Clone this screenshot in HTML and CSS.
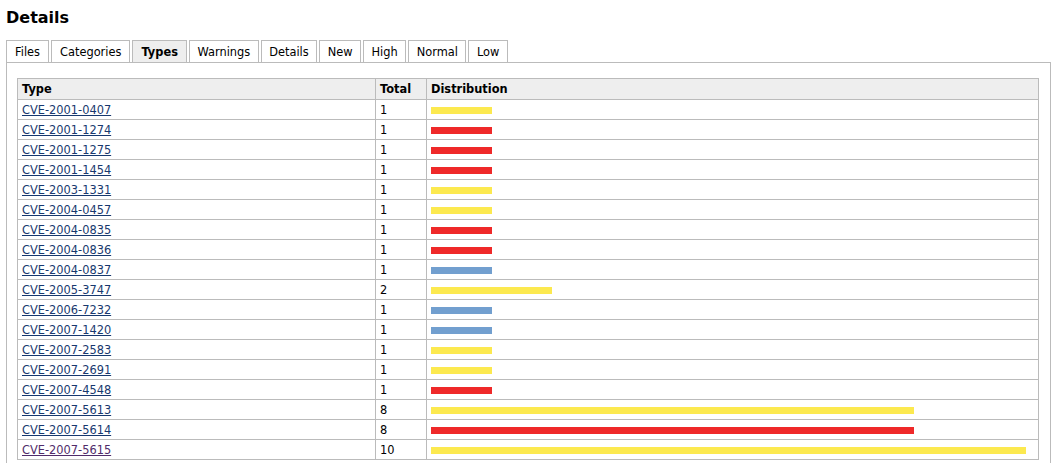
FILE: index.html
```html
<!DOCTYPE html>
<html>
<head>
<meta charset="utf-8">
<title>Details</title>
<link rel="stylesheet" href="styles.css">
</head>
<body>
<h1 class="title">Details</h1>
<ul class="tabs">
  <li class="tab">Files</li>
  <li class="tab">Categories</li>
  <li class="tab active">Types</li>
  <li class="tab">Warnings</li>
  <li class="tab">Details</li>
  <li class="tab">New</li>
  <li class="tab">High</li>
  <li class="tab">Normal</li>
  <li class="tab">Low</li>
</ul>
<div class="panel">
  <table class="grid">
    <colgroup><col class="c-type"><col class="c-total"><col></colgroup>
    <thead>
      <tr><th>Type</th><th>Total</th><th>Distribution</th></tr>
    </thead>
    <tbody>
      <tr><td><a href="#">CVE-2001-0407</a></td><td>1</td><td><span class="bar yellow" style="width:61px"></span></td></tr>
      <tr><td><a href="#">CVE-2001-1274</a></td><td>1</td><td><span class="bar red" style="width:61px"></span></td></tr>
      <tr><td><a href="#">CVE-2001-1275</a></td><td>1</td><td><span class="bar red" style="width:61px"></span></td></tr>
      <tr><td><a href="#">CVE-2001-1454</a></td><td>1</td><td><span class="bar red" style="width:61px"></span></td></tr>
      <tr><td><a href="#">CVE-2003-1331</a></td><td>1</td><td><span class="bar yellow" style="width:61px"></span></td></tr>
      <tr><td><a href="#">CVE-2004-0457</a></td><td>1</td><td><span class="bar yellow" style="width:61px"></span></td></tr>
      <tr><td><a href="#">CVE-2004-0835</a></td><td>1</td><td><span class="bar red" style="width:61px"></span></td></tr>
      <tr><td><a href="#">CVE-2004-0836</a></td><td>1</td><td><span class="bar red" style="width:61px"></span></td></tr>
      <tr><td><a href="#">CVE-2004-0837</a></td><td>1</td><td><span class="bar blue" style="width:61px"></span></td></tr>
      <tr><td><a href="#">CVE-2005-3747</a></td><td>2</td><td><span class="bar yellow" style="width:121px"></span></td></tr>
      <tr><td><a href="#">CVE-2006-7232</a></td><td>1</td><td><span class="bar blue" style="width:61px"></span></td></tr>
      <tr><td><a href="#">CVE-2007-1420</a></td><td>1</td><td><span class="bar blue" style="width:61px"></span></td></tr>
      <tr><td><a href="#">CVE-2007-2583</a></td><td>1</td><td><span class="bar yellow" style="width:61px"></span></td></tr>
      <tr><td><a href="#">CVE-2007-2691</a></td><td>1</td><td><span class="bar yellow" style="width:61px"></span></td></tr>
      <tr><td><a href="#">CVE-2007-4548</a></td><td>1</td><td><span class="bar red" style="width:61px"></span></td></tr>
      <tr><td><a href="#">CVE-2007-5613</a></td><td>8</td><td><span class="bar yellow" style="width:483px"></span></td></tr>
      <tr><td><a href="#">CVE-2007-5614</a></td><td>8</td><td><span class="bar red" style="width:483px"></span></td></tr>
      <tr><td><a href="#" class="visited">CVE-2007-5615</a></td><td>10</td><td><span class="bar yellow" style="width:595px"></span></td></tr>
    </tbody>
  </table>
</div>
</body>
</html>
```

FILE: styles.css
```css
html, body {
  margin: 0;
  padding: 0;
  background: #fff;
}
body {
  padding: 0 6px;
  font-family: "DejaVu Sans", Verdana, sans-serif;
  font-size: 11.4px;
  color: #000;
}
.title {
  margin: 8px 0 13px;
  font-size: 16px;
  line-height: 19px;
  font-weight: bold;
}
.tabs {
  list-style: none;
  margin: 0;
  padding: 0;
  display: flex;
  gap: 2px;
  height: 22px;
  align-items: flex-end;
}
.tab {
  height: 19px;
  line-height: 19px;
  padding: 2px 8px 0;
  border: 1px solid #bbb;
  border-bottom: none;
  background: #fff;
}
.tab:nth-child(n+4) {
  padding: 2px 7.5px 0;
}
.tab.active {
  background: #eee;
  font-weight: bold;
}
.panel {
  border: 1px solid #bbb;
  border-bottom: none;
  padding: 15px 11px 12px 10px;
}
.grid {
  width: 100%;
  border-collapse: collapse;
  table-layout: fixed;
  border: 1px solid #bbb;
}
.c-type { width: 358px; }
.c-total { width: 51px; }
.grid th, .grid td {
  border: 1px solid #bbb;
  padding: 1px 4px 0;
  text-align: left;
  white-space: nowrap;
  line-height: 17px;
}
.grid th {
  height: 19px;
  background: #eee;
  font-weight: bold;
}
.grid td {
  height: 18px;
}
.grid a {
  color: #17386e;
  text-decoration: underline;
}
.grid a.visited {
  color: #4f2c6a;
}
.bar {
  display: block;
  height: 7px;
}
.yellow { background: #fce94f; }
.red { background: #ef2929; }
.blue { background: #729fcf; }
```
